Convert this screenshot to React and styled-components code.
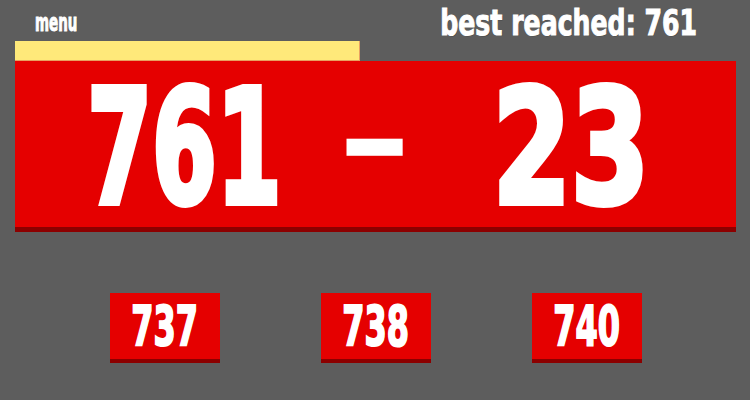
import React from "react";
import styled, { createGlobalStyle } from "styled-components";

const Global = createGlobalStyle`
  html, body { margin: 0; padding: 0; background: #5d5d5d; }
  body { width: 750px; height: 400px; overflow: hidden; font-family: "DejaVu Sans Condensed", "DejaVu Sans", sans-serif; }
`;

const Page = styled.div`
  width: 750px;
  height: 400px;
  display: flex;
  flex-direction: column;
  color: #fff;
`;

const Header = styled.div`
  height: 41px;
  display: flex;
  align-items: flex-start;
  justify-content: space-between;
  padding: 0 53px 0 35px;
  box-sizing: border-box;
`;

const MenuLink = styled.div`
  margin-top: 10px;
  font-weight: 700;
  font-size: 25px;
  line-height: 1;
  -webkit-text-stroke: 1px #fff;
  transform: scaleX(0.6);
  transform-origin: left center;
  text-shadow: 1px 1px 0 rgba(0, 0, 0, 0.25);
  cursor: pointer;
`;

const Best = styled.div`
  margin-top: 6px;
  font-weight: 700;
  font-size: 35px;
  line-height: 1;
  white-space: nowrap;
  -webkit-text-stroke: 1px #fff;
  transform: scaleX(0.8);
  transform-origin: right center;
  text-shadow: 1px 1px 0 rgba(0, 0, 0, 0.25);
`;

const Progress = styled.div`
  height: 20px;
  margin-left: 15px;
  width: 345px;
  background: #ffe97a;
  box-shadow: inset -1px -1px 0 #e8a060;
`;

const Panel = styled.div`
  margin: 0 14px 0 15px;
  height: 166px;
  background: #e50000;
  box-shadow: 0 5px 0 #8c0000;
  display: flex;
  align-items: center;
  padding: 8px 0 0 49px;
  box-sizing: border-box;
`;

const Glyphs = styled.div`
  width: ${(p) => p.$w}px;
  margin-right: ${(p) => p.$gap || 0}px;
  display: flex;
  justify-content: center;
  font-weight: 700;
  font-size: 158px;
  line-height: 1;
  white-space: nowrap;
  -webkit-text-stroke: 6px #fff;
  span {
    display: inline-block;
    transform: ${(p) => p.$tf};
  }
`;

const Choices = styled.div`
  margin-top: 66px;
  margin-left: 15px;
  width: 721px;
  display: flex;
  justify-content: center;
  gap: 101px;
`;

const Choice = styled.button`
  width: 110px;
  height: 66px;
  border: none;
  padding: 0;
  background: #e50000;
  box-shadow: 0 4px 0 #8c0000;
  color: #fff;
  font-family: inherit;
  font-weight: 700;
  font-size: 55px;
  line-height: 1;
  -webkit-text-stroke: 2px #fff;
  display: flex;
  align-items: center;
  justify-content: center;
  cursor: pointer;
  span {
    display: inline-block;
    transform: scaleX(0.645);
  }
`;

export default function App() {
  const choices = [737, 738, 740];
  return (
    <Page>
      <Global />
      <Header>
        <MenuLink>menu</MenuLink>
        <Best>best reached: 761</Best>
      </Header>
      <Progress />
      <Panel>
        <Glyphs $w={240} $gap={21} $tf="scaleX(0.655)">
          <span>761</span>
        </Glyphs>
        <Glyphs $w={100} $gap={46} $tf="translateY(-6px) scale(1.13, 0.6)">
          <span>-</span>
        </Glyphs>
        <Glyphs $w={200} $tf="scaleX(0.79)">
          <span>23</span>
        </Glyphs>
      </Panel>
      <Choices>
        {choices.map((c) => (
          <Choice key={c}>
            <span>{c}</span>
          </Choice>
        ))}
      </Choices>
    </Page>
  );
}
